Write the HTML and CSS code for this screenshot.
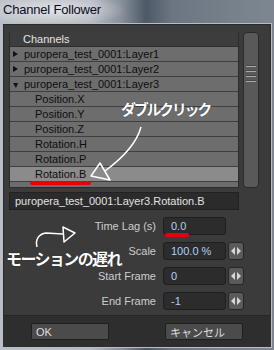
FILE: index.html
```html
<!DOCTYPE html>
<html lang="ja">
<head>
    <meta charset="UTF-8">
    <title>Channel Follower</title>
    <link rel="stylesheet" href="styles.css">
</head>
<body>
    <div class="pantalla">
        <div class="titulo">Channel Follower</div>
        <div class="ventana">
            <div class="principal">
                <div class="explorador">
                    <div class="lista">
                        <div class="cabecera">Channels</div>
                        <div class="fila grupo"><span class="cerrado"></span>puropera_test_0001:Layer1</div>
                        <div class="fila grupo"><span class="cerrado"></span>puropera_test_0001:Layer2</div>
                        <div class="fila grupo"><span class="abierto"></span>puropera_test_0001:Layer3</div>
                        <div class="fila hijo">Position.X</div>
                        <div class="fila hijo">Position.Y</div>
                        <div class="fila hijo">Position.Z</div>
                        <div class="fila hijo">Rotation.H</div>
                        <div class="fila hijo">Rotation.P</div>
                        <div class="fila hijo activa">Rotation.B</div>
                        <div class="fila hijo"></div>
                    </div>
                    <div class="barra">
                        <div class="agarre"><i></i><i></i><i></i><i></i></div>
                    </div>
                </div>
                <div class="ruta">puropera_test_0001:Layer3.Rotation.B</div>
                <div class="campos">
                    <div class="campo">
                        <span class="etiqueta">Time Lag (s)</span>
                        <span class="valor">0.0</span>
                    </div>
                    <div class="campo">
                        <span class="etiqueta">Scale</span>
                        <span class="valor">100.0 %</span>
                        <span class="flechas"><svg width="10" height="8" viewBox="0 0 10 8"><polygon points="4,0 4,8 0,4"/><polygon points="6,0 6,8 10,4"/></svg></span>
                    </div>
                    <div class="campo">
                        <span class="etiqueta">Start Frame</span>
                        <span class="valor">0</span>
                        <span class="flechas"><svg width="10" height="8" viewBox="0 0 10 8"><polygon points="4,0 4,8 0,4"/><polygon points="6,0 6,8 10,4"/></svg></span>
                    </div>
                    <div class="campo">
                        <span class="etiqueta">End Frame</span>
                        <span class="valor">-1</span>
                        <span class="flechas"><svg width="10" height="8" viewBox="0 0 10 8"><polygon points="4,0 4,8 0,4"/><polygon points="6,0 6,8 10,4"/></svg></span>
                    </div>
                </div>
            </div>
            <div class="botones">
                <button class="boton">OK</button>
                <button class="boton">キャンセル</button>
            </div>
        </div>

        <!-- anotaciones encima de la captura -->
        <svg class="marcas" width="274" height="350" viewBox="0 0 274 350">
            <path class="rojo" d="M32 183 L89 183"/>
            <path class="rojo" d="M167 235 L187 235"/>
            <path class="blanco" d="M141 127 C137 142, 124 157, 105 171"/>
            <polygon class="blanco" points="91,176 100,163 110,180"/>
            <path class="blanco" d="M37 247 C35 239, 39 234, 46 233 L63 234"/>
            <polygon class="blanco" points="63,227 75,233 64,242"/>
        </svg>
        <div class="nota nota-clic">ダブルクリック</div>
        <div class="nota nota-retraso">モーションの遅れ</div>
    </div>
</body>
</html>
```
FILE: styles.css
```css
body {
    margin: 0;
    background: #8b9198;
}
.pantalla {
    position: relative;
    width: 274px;
    height: 350px;
    overflow: hidden;
    font-family: 'Liberation Sans', Arial, sans-serif;
    font-size: 11px;
    background:
        radial-gradient(ellipse 75px 16px at 52px 10px, rgba(226, 229, 233, 0.95), rgba(226, 229, 233, 0)),
        linear-gradient(to right, #b9bfc5 0, #b4bac1 90px, #8a939d 120px, #4e5967 146px, #6c7682 172px, #7e8791 274px);
}
.titulo {
    height: 23px;
    box-sizing: border-box;
    padding: 2px 0 0 3px;
    font-size: 13px;
    letter-spacing: -0.2px;
    color: #0c0a22;
}
.ventana {
    margin: 0 2px;
    border: 1px solid #b6bdc4;
    background: #3b3b3b;
    box-shadow: inset 0 0 0 1px #2a2a2a;
}
.principal {
    padding: 8px 0 5px 6px;
}
.explorador {
    display: flex;
    gap: 4px;
}
.lista {
    width: 230px;
    height: 156px;
    box-sizing: border-box;
    border: 1px solid #2c2c2c;
    border-top: none;
    overflow: hidden;
    background: #6d6d6d;
}
.cabecera {
    height: 14px;
    line-height: 14px;
    padding-left: 13px;
    background: #3d3d3d;
    color: #e4e4e4;
    border-bottom: 1px solid #2e2e2e;
}
.fila {
    display: flex;
    align-items: center;
    gap: 6px;
    height: 14px;
    border-bottom: 1px solid #3f3f3f;
    color: #0e0e0e;
    white-space: nowrap;
}
.grupo {
    padding-left: 3px;
}
.hijo {
    padding-left: 25px;
}
.activa {
    background: #8b8b8b;
}
.cerrado {
    width: 0;
    height: 0;
    border-left: 5px solid #111;
    border-top: 3px solid transparent;
    border-bottom: 3px solid transparent;
}
.abierto {
    width: 0;
    height: 0;
    margin-top: 2px;
    border-top: 5px solid #111;
    border-left: 3px solid transparent;
    border-right: 2px solid transparent;
}
.barra {
    width: 16px;
    height: 156px;
    box-sizing: border-box;
    border: 1px solid #2a2a2a;
    border-radius: 4px;
    background: #595959;
}
.agarre {
    display: flex;
    flex-direction: column;
    gap: 4px;
    padding: 33px 2px 0 2px;
}
.agarre i {
    display: block;
    height: 1px;
    background: #a9a9a9;
    box-shadow: 0 -1px 0 #464646;
}
.ruta {
    width: 230px;
    height: 18px;
    box-sizing: border-box;
    margin-top: 4px;
    padding-left: 5px;
    line-height: 16px;
    border: 1px solid #222;
    background: #2b2b2b;
    color: #e2e2e2;
}
.campos {
    display: flex;
    flex-direction: column;
    gap: 7px;
    margin-top: 7px;
}
.campo {
    display: flex;
    align-items: center;
    height: 18px;
}
.etiqueta {
    width: 147px;
    margin-right: 7px;
    text-align: right;
    color: #cdcdcd;
}
.valor {
    width: 63px;
    height: 18px;
    box-sizing: border-box;
    padding-left: 7px;
    line-height: 16px;
    border: 1px solid #1e1e1e;
    border-radius: 3px;
    background: #2c2c2c;
    color: #b2cff5;
}
.flechas {
    display: flex;
    align-items: center;
    justify-content: center;
    width: 16px;
    height: 18px;
    box-sizing: border-box;
    margin-left: 2px;
    border: 1px solid #262626;
    border-radius: 3px;
    background: #5a5a5a;
}
.flechas svg {
    fill: #d6d6d6;
}
.botones {
    display: flex;
    gap: 56px;
    padding: 7px 0 7px 28px;
    border-top: 1px solid #262626;
    background: #2e2e2e;
}
.boton {
    width: 78px;
    height: 17px;
    padding: 0 0 0 4px;
    text-align: left;
    border: 1px solid #1f1f1f;
    border-radius: 2px;
    background: #4b4b4b;
    color: #dedede;
    font-family: 'Liberation Sans', 'Noto Sans CJK JP', sans-serif;
    font-size: 11px;
}
.marcas {
    position: absolute;
    top: 0;
    left: 0;
    pointer-events: none;
}
.rojo {
    stroke: #e6000b;
    stroke-width: 4;
    stroke-linecap: round;
    fill: none;
}
.blanco {
    stroke: #ffffff;
    stroke-width: 1.5;
    stroke-linejoin: round;
    fill: none;
}
.nota {
    position: absolute;
    color: #ffffff;
    font-family: 'Noto Sans CJK JP', sans-serif;
    font-weight: bold;
    white-space: nowrap;
    text-shadow: 0 0 1px rgba(0, 0, 0, 0.7);
}
.nota-clic {
    left: 121px;
    top: 100px;
    font-size: 15px;
    line-height: 18px;
    letter-spacing: -2.3px;
}
.nota-retraso {
    left: 6px;
    top: 248px;
    font-size: 16px;
    line-height: 20px;
    letter-spacing: -1.6px;
}
```
